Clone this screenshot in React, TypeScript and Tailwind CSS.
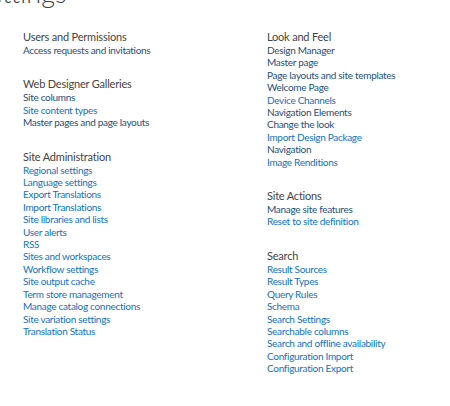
const sections: { title: string; links: [string, boolean][] }[][] = [
  [
    { title: "Users and Permissions", links: [["Access requests and invitations", true]] },
    {
      title: "Web Designer Galleries",
      links: [
        ["Site columns", true],
        ["Site content types", false],
        ["Master pages and page layouts", true],
      ],
    },
    {
      title: "Site Administration",
      links: [
        ["Regional settings", false],
        ["Language settings", false],
        ["Export Translations", false],
        ["Import Translations", false],
        ["Site libraries and lists", false],
        ["User alerts", false],
        ["RSS", false],
        ["Sites and workspaces", false],
        ["Workflow settings", false],
        ["Site output cache", false],
        ["Term store management", false],
        ["Manage catalog connections", false],
        ["Site variation settings", false],
        ["Translation Status", false],
      ],
    },
  ],
  [
    {
      title: "Look and Feel",
      links: [
        ["Design Manager", true],
        ["Master page", true],
        ["Page layouts and site templates", true],
        ["Welcome Page", true],
        ["Device Channels", false],
        ["Navigation Elements", true],
        ["Change the look", true],
        ["Import Design Package", false],
        ["Navigation", true],
        ["Image Renditions", false],
      ],
    },
    {
      title: "Site Actions",
      links: [
        ["Manage site features", true],
        ["Reset to site definition", false],
      ],
    },
    {
      title: "Search",
      links: [
        ["Result Sources", false],
        ["Result Types", false],
        ["Query Rules", false],
        ["Schema", false],
        ["Search Settings", false],
        ["Searchable columns", false],
        ["Search and offline availability", false],
        ["Configuration Import", false],
        ["Configuration Export", false],
      ],
    },
  ],
];

export default function App() {
  return (
    <div className="w-[450px] h-[406px] overflow-hidden bg-white font-['Lato',sans-serif]">
      {/* page title, scrolled mostly out of view */}
      <h1 className="-mt-[23px] -ml-[26px] text-[27px] leading-[32px] font-light text-[#444]">Settings</h1>

      <div className="grid grid-cols-[244px_1fr] pl-[23px] mt-[21px]">
        {sections.map((col, ci) => (
          <div key={ci} className="flex flex-col gap-[21px]">
            {col.map((s) => (
              <div key={s.title}>
                <h3 className="text-[11px] leading-[14px] tracking-[-0.2px] text-[#444]">{s.title}</h3>
                <ul>
                  {s.links.map(([label, visited]) => (
                    <li key={label} className="text-[10px] leading-[12.4px] tracking-[-0.3px]">
                      <a href="#" className={visited ? "text-[#1e4f7d]" : "text-[#0f72c8]"}>
                        {label}
                      </a>
                    </li>
                  ))}
                </ul>
              </div>
            ))}
          </div>
        ))}
      </div>
    </div>
  );
}
